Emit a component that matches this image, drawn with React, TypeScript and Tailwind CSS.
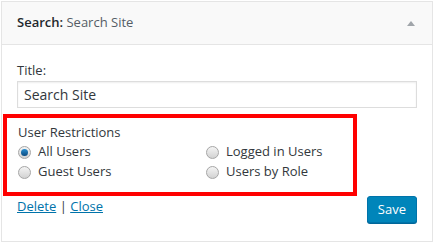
import React from "react";

type Opt = { label: string; checked?: boolean };

const Radio = ({ label, checked }: Opt) => (
  <label className="flex items-center gap-[7px] h-[20px]">
    <span className="w-[13px] h-[13px] rounded-full border border-[#a6a6a6] bg-gradient-to-b from-[#f4f4f4] to-[#d2d2d2] flex items-center justify-center">
      {checked && (
        <span className="w-[7px] h-[7px] rounded-full bg-gradient-to-b from-[#2a8fd0] to-[#0b4a80]" />
      )}
    </span>
    <span>{label}</span>
  </label>
);

const App = () => {
  const options: Opt[] = [
    { label: "All Users", checked: true },
    { label: "Logged in Users" },
    { label: "Guest Users" },
    { label: "Users by Role" },
  ];

  return (
    <div className="w-[434px] h-[243px] bg-white p-px font-['Open_Sans',sans-serif] text-[#32373c]">
      <div className="w-[432px] h-[241px] border border-[#e5e5e5] flex flex-col">
        <div className="h-[43px] bg-[#f9f9f9] border-b border-[#e5e5e5] flex items-center justify-between pl-[15px] pr-[17px] text-[13px]">
          <h3>
            <span className="text-[#23282d] font-semibold">Search:</span>{" "}
            <span className="text-[#555d66]">Search Site</span>
          </h3>
          <span className="w-0 h-0 border-l-[4px] border-r-[4px] border-b-[5px] border-l-transparent border-r-transparent border-b-[#a0a5aa]" />
        </div>
        <div className="flex-1 px-[15px] pt-[15px] text-[13px]">
          <label className="block leading-[20px]">Title:</label>
          <input
            className="mt-[1px] w-full h-[27px] border border-[#dddddd] px-[6px] text-[14px] text-[#32373c] shadow-[inset_0_1px_2px_rgba(0,0,0,0.07)] outline-none"
            type="text"
            defaultValue="Search Site"
          />
          <div className="mt-[6px] -ml-[14px] w-[354px] h-[82px] border-[4px] border-[#ff0000] pl-[11px] pt-[4px]">
            <p className="leading-[20px]">User Restrictions</p>
            <div className="grid grid-cols-[188px_1fr]">
              {options.map((o) => (
                <Radio key={o.label} {...o} />
              ))}
            </div>
          </div>
          <div className="flex justify-between items-start">
            <p className="leading-[20px]">
              <a href="#" className="text-[#0073aa] underline">
                Delete
              </a>{" "}
              |{" "}
              <a href="#" className="text-[#0073aa] underline">
                Close
              </a>
            </p>
            <button className="mt-0 h-[27px] px-[10px] bg-[#0085ba] border border-[#0073aa] rounded-[3px] text-white text-[13px] shadow-[0_1px_0_#006799]">
              Save
            </button>
          </div>
        </div>
      </div>
    </div>
  );
};

export default App;
